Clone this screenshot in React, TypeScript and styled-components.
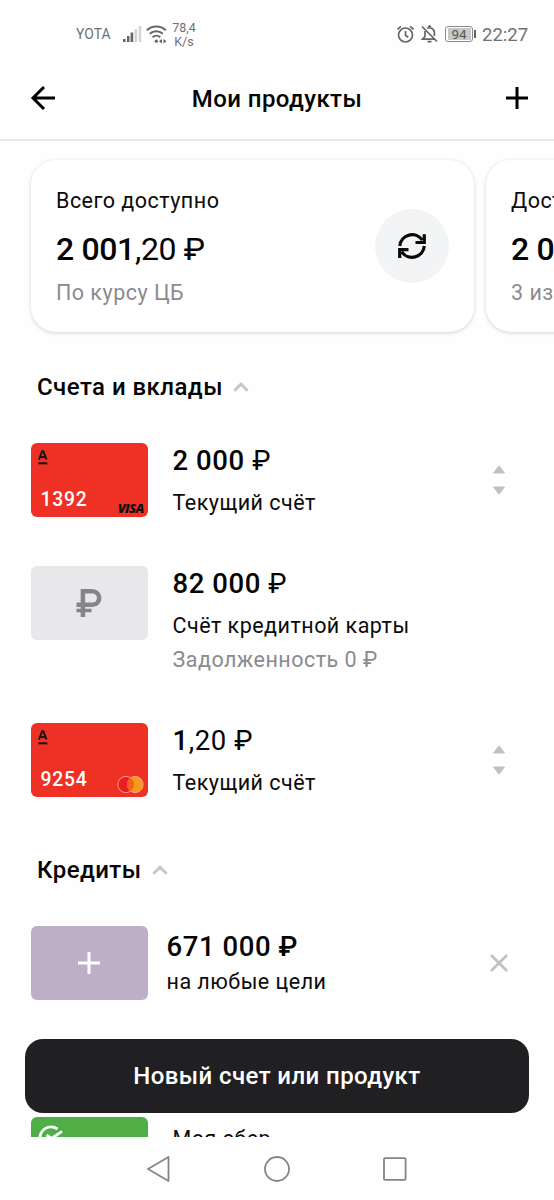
import React from "react";
import styled, { createGlobalStyle } from "styled-components";

const GlobalStyle = createGlobalStyle`
  *, *::before, *::after { box-sizing: border-box; }
  body { margin: 0; background: #fefefe; font-family: Roboto, "Noto Sans", sans-serif; color: #050505; }
  svg { display: block; flex: none; }
`;

const Screen = styled.div`
  position: relative;
  display: flex;
  flex-direction: column;
  width: 554px;
  height: 1200px;
  overflow: hidden;
  background: #fefefe;
`;

const StatusBar = styled.div`
  display: flex;
  justify-content: space-between;
  height: 68px;
  padding: 0 26px 0 76px;
  color: #707070;
`;

const StatusGroup = styled.div<{ $gap: number }>`
  display: flex;
  align-items: center;
  gap: ${(p) => p.$gap}px;
`;

const Carrier = styled.span`
  width: 43px;
  font-size: 13.9px;
  line-height: 16px;
  letter-spacing: 0.1px;
`;

const Speed = styled.div`
  width: 26px;
  padding-top: 1px;
  font-size: 12.5px;
  line-height: 14px;
  text-align: center;
`;

const Battery = styled.div`
  position: relative;
  display: flex;
  align-items: center;
  justify-content: center;
  width: 28px;
  height: 16px;
  margin-right: 2px;
  padding: 1px;
  border: 1px solid #8a8a8a;
  border-radius: 3px;

  &::after {
    content: "";
    position: absolute;
    right: -4px;
    top: 3px;
    width: 2px;
    height: 8px;
    background: #666;
  }
`;

const BatteryFill = styled.span`
  width: 23px;
  background: #c8c8c8;
  color: #555;
  font-size: 13.5px;
  line-height: 12px;
  text-align: center;
`;

const Clock = styled.span`
  width: 46px;
  padding-top: 1px;
  font-size: 18.5px;
  line-height: 22px;
  white-space: nowrap;
`;

const Header = styled.header`
  display: flex;
  align-items: center;
  justify-content: space-between;
  height: 73px;
  padding: 0 25px 11px 30px;
  border-bottom: 2px solid #e7e7e7;
`;

const Title = styled.h1`
  margin: 2px 7px 0 0;
  font-size: 24px;
  font-weight: 500;
  line-height: 28px;
  letter-spacing: 0.42px;
`;

const Content = styled.main`
  height: 996px;
  padding-top: 1px;
  overflow: hidden;
`;

const Carousel = styled.div`
  display: flex;
  gap: 12px;
  height: 231px;
  padding: 18px 0 41px 31px;
`;

const Summary = styled.section`
  display: flex;
  flex: none;
  align-items: center;
  justify-content: space-between;
  width: 443px;
  height: 172px;
  padding: 0 25px;
  border-radius: 25px;
  background: #fff;
  box-shadow: 0 1px 4px rgba(0, 0, 0, 0.17);
`;

const SummaryText = styled.div`
  display: flex;
  flex-direction: column;
  gap: 12px;
  padding-top: 2px;
`;

const Text = styled.span<{ $muted?: boolean }>`
  font-size: 21.5px;
  line-height: 28px;
  letter-spacing: 0.48px;
  white-space: nowrap;
  color: ${(p) => (p.$muted ? "#8b8b8e" : "#0b0b0b")};
`;

const Total = styled.span`
  padding-top: 4px;
  font-size: 32px;
  line-height: 36px;
  letter-spacing: -0.35px;
  white-space: nowrap;
`;

const Strong = styled.span`
  font-weight: 500;
`;

const RoundButton = styled.button`
  display: grid;
  place-items: center;
  width: 74px;
  height: 74px;
  padding: 0;
  border: 0;
  border-radius: 50%;
  background: #f3f4f6;
`;

const SectionTitle = styled.h2`
  display: flex;
  align-items: center;
  gap: 10px;
  height: 28px;
  margin: 0 0 42px 37px;
  font-size: 24px;
  font-weight: 500;
  line-height: 28px;
  letter-spacing: 0.45px;
`;

const Row = styled.div<{ $height: number; $gap?: number }>`
  display: flex;
  align-items: flex-start;
  gap: ${(p) => p.$gap ?? 25}px;
  height: ${(p) => p.$height}px;
  padding: 0 45.5px 0 31px;
`;

const RowBody = styled.div<{ $gap?: number; $top?: number }>`
  display: flex;
  flex: 1;
  flex-direction: column;
  gap: ${(p) => p.$gap ?? 12}px;
  padding-top: ${(p) => p.$top ?? 0.5}px;
`;

const Details = styled.div`
  display: flex;
  flex-direction: column;
  gap: 6px;
`;

const Amount = styled.span`
  font-size: 27.5px;
  line-height: 33px;
  letter-spacing: 0.58px;
  white-space: nowrap;
`;

const RowAction = styled.div`
  display: flex;
  align-items: center;
  height: 74px;
`;

const Card = styled.div<{ $color: string }>`
  display: flex;
  flex: none;
  flex-direction: column;
  justify-content: space-between;
  width: 116.5px;
  height: 74px;
  padding: 7px 4px 4px 7px;
  border-radius: 6px;
  background: ${(p) => p.$color};
`;

const IconCard = styled(Card)`
  align-items: center;
  justify-content: center;
  padding: 0;
`;

const CardFooter = styled.div`
  display: flex;
  align-items: flex-end;
  justify-content: space-between;
`;

const CardNumber = styled.span`
  padding: 0 0 1px 2.5px;
  color: #fff;
  font-size: 19.3px;
  font-weight: 500;
  line-height: 24px;
  letter-spacing: 0.8px;
`;

const Visa = styled.span`
  color: #111;
  font-family: "Open Sans", sans-serif;
  font-size: 13px;
  font-style: italic;
  font-weight: 800;
  line-height: 9px;
  letter-spacing: -0.7px;
`;

const NewButton = styled.button`
  position: absolute;
  left: 25px;
  top: 1039px;
  width: 504px;
  height: 74px;
  padding: 0 0 1px;
  border: 0;
  border-radius: 18px;
  background: #202022;
  color: #fff;
  font: 500 24px/28px Roboto, sans-serif;
  letter-spacing: 0.4px;
`;

const NavBar = styled.nav`
  display: flex;
  align-items: center;
  justify-content: center;
  gap: 92px;
  height: 63px;
  padding-right: 2px;
`;

const AlfaMark = () => (
  <svg width="10" height="15" viewBox="0 0 10 15" fill="none" stroke="#161616">
    <path d="M1 9.6 4.1 1.2h1.2L8.5 9.6M2.2 7h5.1" strokeWidth="1.9" />
    <path d="M.3 13.3h9" strokeWidth="2" />
  </svg>
);

const Mastercard = () => (
  <svg width="28" height="19" viewBox="0 0 28 19">
    <circle cx="10" cy="10.5" r="8.1" fill="#ea1d25" />
    <circle cx="19" cy="10.5" r="8.1" fill="#f59a1b" />
    <path d="M14.5 3.8a8.1 8.1 0 0 1 0 13.4 8.1 8.1 0 0 1 0-13.4Z" fill="#f26322" />
    <path d="M14.5 3.8a8.1 8.1 0 1 0 0 13.4 8.1 8.1 0 1 0 0-13.4Z" fill="none" stroke="#ffb9a6" strokeWidth=".8" />
  </svg>
);

const Chevron = () => (
  <svg width="16" height="12" viewBox="0 0 16 12" fill="none" stroke="#c7c7c7" strokeWidth="3">
    <path d="m1.4 9.8 6.6-6.6 6.6 6.6" />
  </svg>
);

const Sorter = () => (
  <svg width="20" height="32" viewBox="0 0 20 32" fill="#c1c1c1" stroke="#c1c1c1" strokeWidth="1" strokeLinejoin="round">
    <path d="M10 1.8 15.5 9H4.500zM10 30.200l5.500-7.200H4.500z" />
  </svg>
);

const SignalIcon = () => (
  <svg width="19" height="18" viewBox="0 0 19 18">
    <path d="M0 14h2.5v3H0zM4 11h2.5v6H4zM7.6 7.5h2.6V17H7.6z" fill="#666" />
    <path d="M11.6 4h2.5v13h-2.5zM15.7 1h2.5v16h-2.5z" fill="#d3d3d3" />
  </svg>
);

const WifiIcon = () => (
  <svg width="21" height="20" viewBox="0 0 21 20" fill="none" stroke="#666" strokeWidth="2">
    <path d="M.8 6.2a14 14 0 0 1 19 0M3.8 9.8a9.5 9.5 0 0 1 13 0M6.6 13.2a5.5 5.5 0 0 1 7.6 0" />
    <g fill="#666" stroke="none">
      <circle cx="10.3" cy="17.2" r="1.6" />
      <path d="m13 17.2 3-2.3v4.6zM20.5 17.2l-3-2.3v4.6z" />
    </g>
  </svg>
);

const AlarmIcon = () => (
  <svg width="18" height="18" viewBox="0 0 18 18" fill="none" stroke="#666" strokeWidth="1.7">
    <circle cx="9.5" cy="10" r="7" />
    <path d="M9.500 6v4.300l2.700 2M1.500 4.300l3.400-2.900M17.500 4.300l-3.400-2.900" />
  </svg>
);

const MutedBellIcon = () => (
  <svg width="17" height="18" viewBox="0 0 17 18" fill="none" stroke="#666" strokeWidth="1.7">
    <path d="M1 1.5 16 16.5M4 6v5.5L1.5 14.2h11.8M6 3.3C9.5 1.5 13.4 4 13.4 7.5v3.5M7.3 2.2 8.4 1l1.5 1.2M6.5 16.6h4" />
  </svg>
);

const RefreshIcon = () => (
  <svg width="32" height="32" viewBox="0 0 32 32" fill="none" stroke="#0a0a0a" strokeWidth="3.2">
    <path d="M3.8 16A12.3 12.3 0 0 1 26.3 10.2M28.3 4.2v8.3h-8.8" />
    <path d="M28.3 16A12.3 12.3 0 0 1 5.8 21.8M3.7 28v-8.3h8.8" />
  </svg>
);

const RubleIcon = () => (
  <svg width="28" height="30" viewBox="0 0 28 30" fill="none" stroke="#858587" strokeWidth="4.5">
    <path d="M7.9 29V3.3h9.200c9.400 0 9.400 13.500 0 13.500H1.500" />
    <path d="M1.500 22.500h15" strokeWidth="3.500" />
  </svg>
);

const SberIcon = () => (
  <svg width="26" height="26" viewBox="0 0 26 26" fill="none" stroke="#fff" strokeWidth="2.8">
    <path d="M19.5 5A11 11 0 1 0 24 14" />
    <path d="m8.500 11 5 3.500L24 7.300" />
  </svg>
);

type AccountProps = {
  number: string;
  brand: React.ReactNode;
  whole: string;
  rest: string;
  height: number;
};

const Account = ({ number, brand, whole, rest, height }: AccountProps) => (
  <Row $height={height}>
    <Card $color="#ef3024">
      <AlfaMark />
      <CardFooter>
        <CardNumber>{number}</CardNumber>
        {brand}
      </CardFooter>
    </Card>
    <RowBody>
      <Amount><Strong>{whole}</Strong>{rest}</Amount>
      <Text>Текущий счёт</Text>
    </RowBody>
    <RowAction><Sorter /></RowAction>
  </Row>
);

export default function App() {
  return (
    <Screen>
      <GlobalStyle />
      <StatusBar>
        <StatusGroup $gap={4}>
          <Carrier>YOTA</Carrier>
          <SignalIcon />
          <WifiIcon />
          <Speed>78,4<br />K/s</Speed>
        </StatusGroup>
        <StatusGroup $gap={7}>
          <AlarmIcon />
          <MutedBellIcon />
          <Battery><BatteryFill>94</BatteryFill></Battery>
          <Clock>22:27</Clock>
        </StatusGroup>
      </StatusBar>
      <Header>
        <svg width="26" height="26" viewBox="0 0 26 26" fill="none" stroke="#000" strokeWidth="3">
          <path d="M25 13H3.5M14 2 3 13l11 11" />
        </svg>
        <Title>Мои продукты</Title>
        <svg width="24" height="24" viewBox="0 0 24 24" stroke="#000" strokeWidth="3">
          <path d="M12 1v22M1 12h22" />
        </svg>
      </Header>
      <Content>
        <Carousel>
          <Summary>
            <SummaryText>
              <Text>Всего доступно</Text>
              <Total><Strong>2 001</Strong>,20 ₽</Total>
              <Text $muted>По курсу ЦБ</Text>
            </SummaryText>
            <RoundButton aria-label="Обновить"><RefreshIcon /></RoundButton>
          </Summary>
          <Summary>
            <SummaryText>
              <Text>Доступно</Text>
              <Total><Strong>2 000</Strong> ₽</Total>
              <Text $muted>3 из 3</Text>
            </SummaryText>
          </Summary>
        </Carousel>
        <SectionTitle>Счета и вклады<Chevron /></SectionTitle>
        <Account number="1392" brand={<Visa>VISA</Visa>} whole="2 000" rest=" ₽" height={123} />
        <Row $height={157}>
          <IconCard $color="#e8e8ea"><RubleIcon /></IconCard>
          <RowBody>
            <Amount><Strong>82 000</Strong> ₽</Amount>
            <Details>
              <Text>Счёт кредитной карты</Text>
              <Text $muted>Задолженность 0 ₽</Text>
            </Details>
          </RowBody>
        </Row>
        <Account number="9254" brand={<Mastercard />} whole="1" rest=",20 ₽" height={133} />
        <SectionTitle>Кредиты<Chevron /></SectionTitle>
        <Row $height={191} $gap={19}>
          <IconCard $color="#beafc7">
            <svg width="22" height="22" viewBox="0 0 22 22" stroke="#fff" strokeWidth="3">
              <path d="M11 0v22M0 11h22" />
            </svg>
          </IconCard>
          <RowBody $gap={5} $top={4}>
            <Amount><Strong>671 000 ₽</Strong></Amount>
            <Text>на любые цели</Text>
          </RowBody>
          <RowAction>
            <svg width="20" height="20" viewBox="0 0 20 20" stroke="#c1c1c1" strokeWidth="2.6">
              <path d="m2 2 16 16M18 2 2 18" />
            </svg>
          </RowAction>
        </Row>
        <Row $height={74}>
          <Card $color="#50ae47"><SberIcon /></Card>
          <RowBody $top={8}><Text>Моя сбер</Text></RowBody>
        </Row>
      </Content>
      <NavBar>
        <svg width="26" height="28" viewBox="0 0 26 28" fill="none" stroke="#858585" strokeWidth="1.8" strokeLinejoin="round">
          <path d="M23.5 2v24L3 14z" />
        </svg>
        <svg width="28" height="28" viewBox="0 0 28 28" fill="none" stroke="#858585" strokeWidth="1.8">
          <circle cx="14" cy="14" r="12" />
        </svg>
        <svg width="24" height="24" viewBox="0 0 24 24" fill="none" stroke="#858585" strokeWidth="1.8">
          <rect x="1" y="1.2" width="21.6" height="21.6" rx="1" />
        </svg>
      </NavBar>
      <NewButton>Новый счет или продукт</NewButton>
    </Screen>
  );
}
